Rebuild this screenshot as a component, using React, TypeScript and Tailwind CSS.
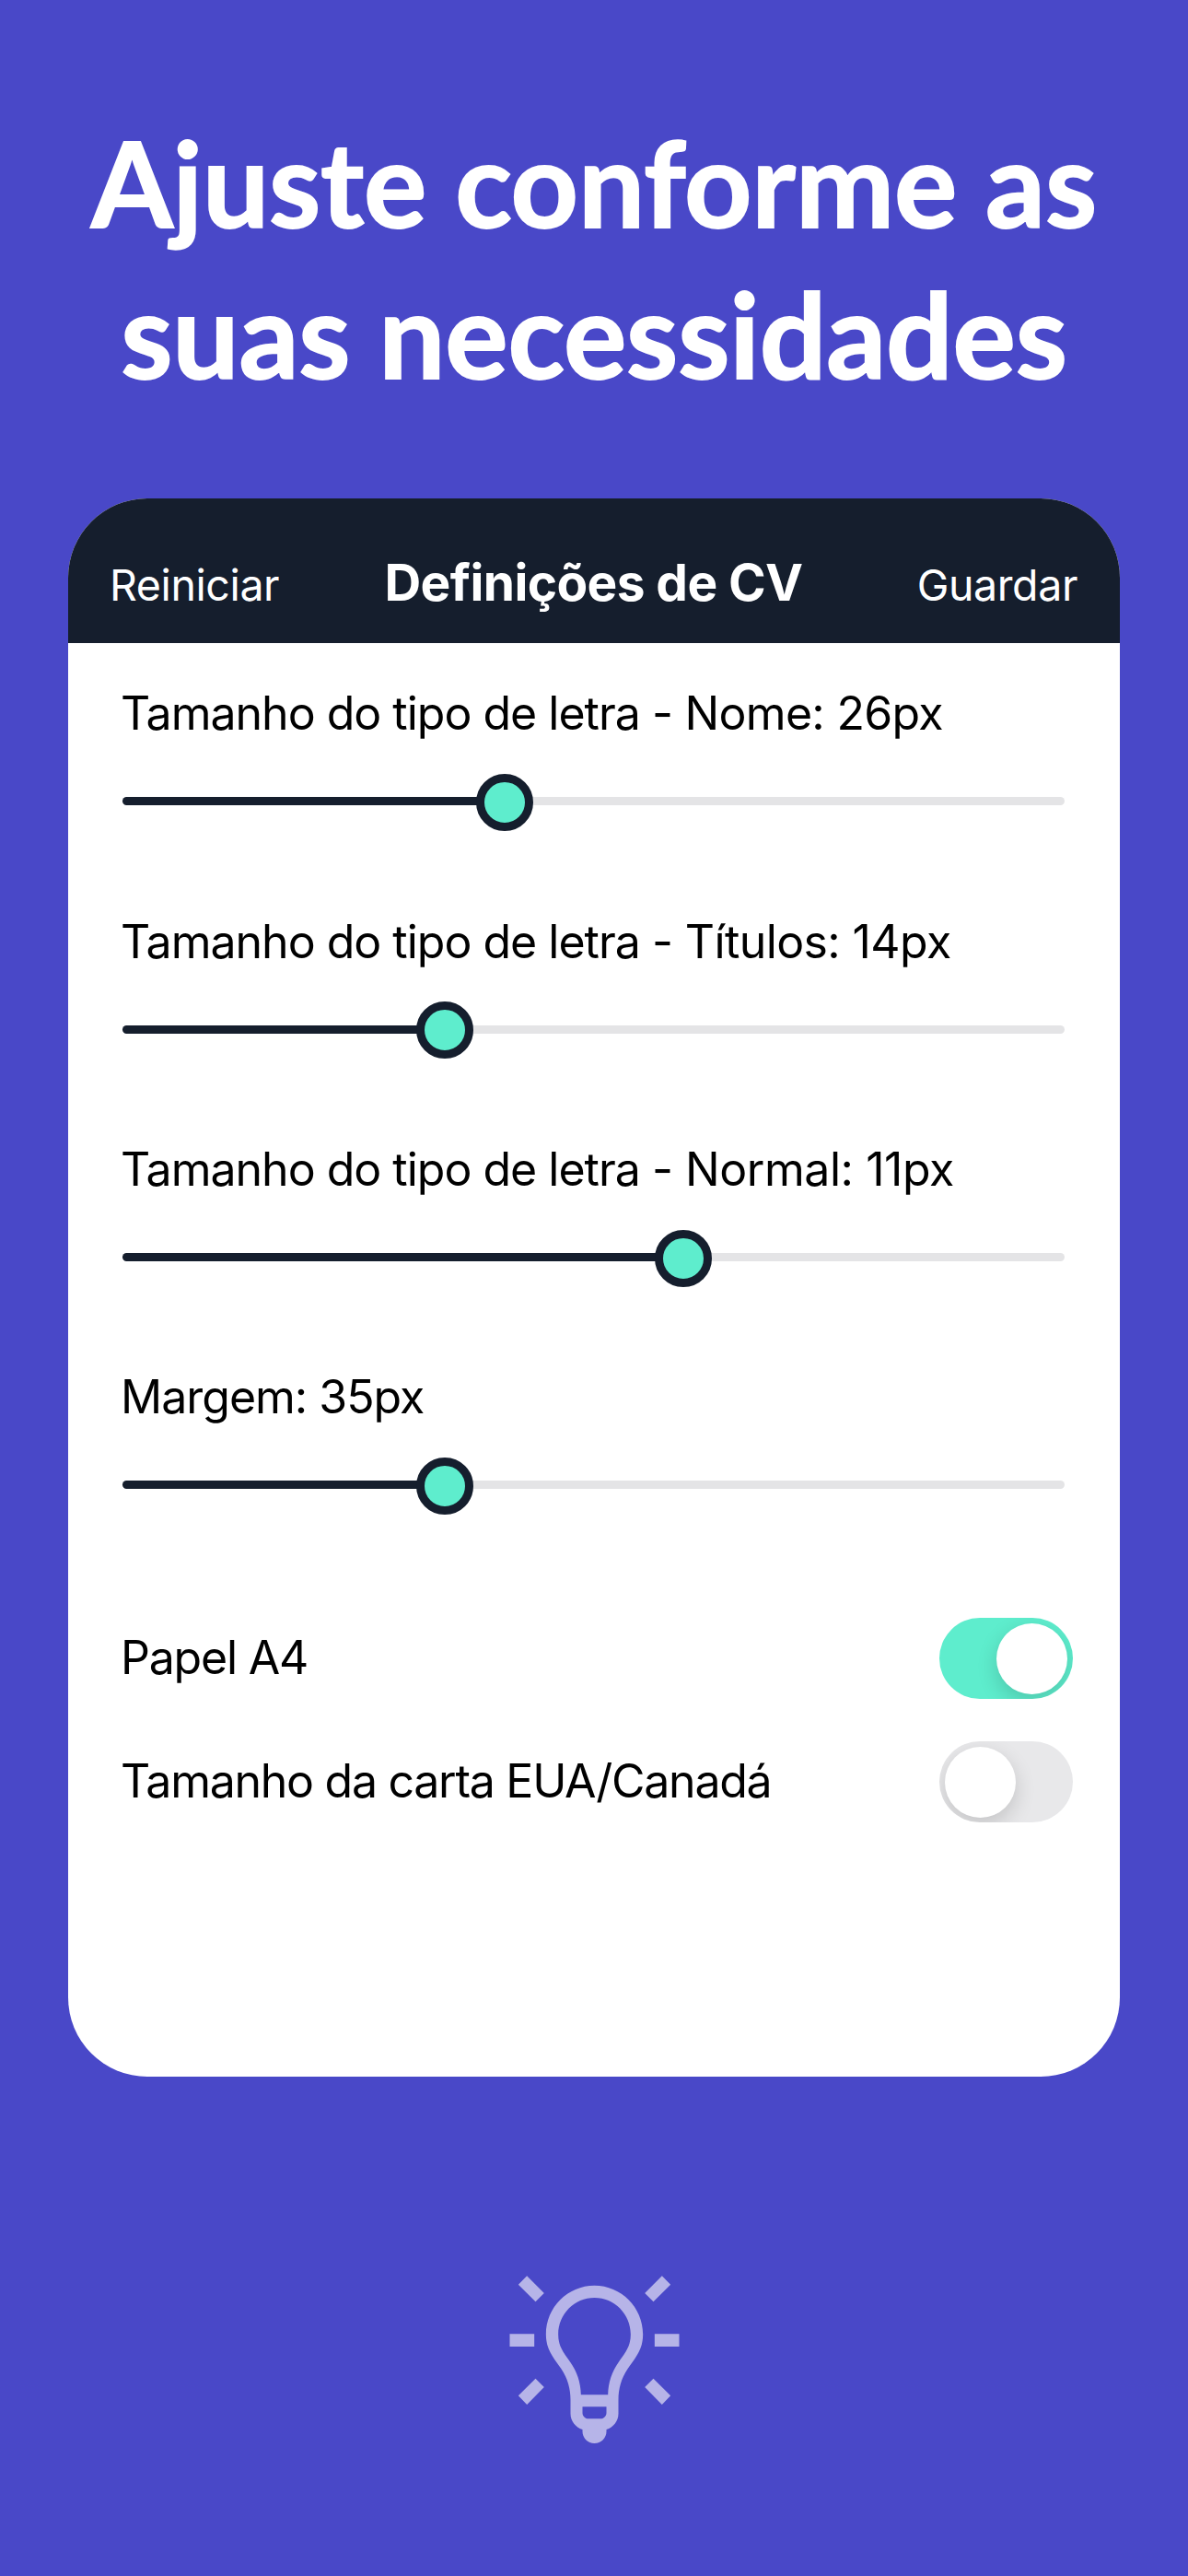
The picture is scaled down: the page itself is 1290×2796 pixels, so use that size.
import { useState } from "react";

type SliderProps = {
    label: string;
    detail: string;
    tracking: string;
    value: number;
}

type ToggleProps = {
    label: string;
    tracking: string;
    on: boolean;
    onToggle: () => void;
}

// value is the left edge of the knob, in px from the start of the track
const sliders: SliderProps[] = [
    { label: "Tamanho do tipo de letra ", detail: "- Nome: 26px", tracking: "tracking-[-0.7px]", value: 383.5 },
    { label: "Tamanho do tipo de letra ", detail: "- Títulos: 14px", tracking: "tracking-[-0.6px]", value: 318.5 },
    { label: "Tamanho do tipo de letra ", detail: "- Normal: 11px", tracking: "tracking-[-0.45px]", value: 577.5 },
    { label: "", detail: "Margem: 35px", tracking: "tracking-[-1px]", value: 318.5 },
];

const SliderRow = ({ label, detail, tracking, value }: SliderProps) => {
    return (
        <div className="h-[247.3px]">
            <div className="h-[60px] leading-[60px] text-[50px] text-black whitespace-pre">
                <span className="tracking-[-1px]">{label}</span>
                <span className={tracking}>{detail}</span>
            </div>
            <div className="relative mt-[61px] mr-[60.5px] ml-[2px] h-[9px] rounded-full bg-[#e4e4e6]">
                <div className="h-full rounded-full bg-[#151e2d]" style={{ width: value + 20 }} />
                <div className="absolute -top-[25.5px] w-[62px] h-[62px] rounded-full border-[9px] border-[#151e2d] bg-[#5eedcd]" style={{ left: value }} />
            </div>
        </div>
    )
}

const ToggleRow = ({ label, tracking, on, onToggle }: ToggleProps) => {
    return (
        <div className="flex items-center justify-between pr-[51px]">
            <span className={`pb-[2px] leading-[60px] text-[50px] text-black whitespace-nowrap ${tracking}`}>{label}</span>
            <button
                onClick={onToggle}
                className={`flex w-[145px] h-[88.5px] items-center overflow-hidden rounded-full px-[6px] ${on ? "justify-end bg-[#5eedcd]" : "justify-start bg-[#e8e8ea]"}`}
            >
                <span className="w-[77px] h-[77px] rounded-full bg-white shadow-[0_8px_22px_rgba(0,0,0,0.16)]" />
            </button>
        </div>
    )
}

const Bulb = () => {
    return (
        <svg viewBox="98 90 554 546" className="w-[185px] h-[182px]" fill="#b6b4e8">
            <path d="M99 280h80v41H99zM571 280h80v41h-80z" />
            <path d="M155 91l56 56-28 28-56-56zM595 91l28 28-56 56-28-28zM183 425l28 28-56 57-28-29zM567 425l56 56-28 29-56-57z" />
            <path
                fillRule="evenodd"
                d="M375 122C288 122 217 193 217 281C217 335 245 360 267 394C288 426 297 458 297 495V539C297 563 313 583 336 591V597C336 619 353 636 375 636S414 619 414 597V591C437 583 453 563 453 539V495C453 458 462 426 483 394C505 360 533 335 533 281C533 193 462 122 375 122ZM375 162C440 162 493 215 493 281C493 322 474 342 454 371C432 402 420 436 419 478H331C330 436 318 402 296 371C276 342 257 322 257 281C257 215 310 162 375 162ZM336 517H414V536C414 548 405 556 394 556H356C345 556 336 548 336 536Z"
            />
        </svg>
    )
}

const App = () => {
    const [a4, setA4] = useState<boolean>(true);

    return (
        <div className="flex h-[2796px] w-[1290px] flex-col items-center overflow-hidden bg-[#4948c8] font-['Inter',sans-serif]">
            <h1 className="mt-[116px] h-[328px] text-center font-['Lato',sans-serif] text-[128px] leading-[164px] font-bold tracking-[-0.15px] text-white whitespace-nowrap [-webkit-text-stroke:1.8px_white]">
                Ajuste conforme as<br />suas necessidades
            </h1>

            <div className="mt-[97.3px] h-[1713px] w-[1142px] overflow-hidden rounded-[86px] bg-white">
                <div className="grid h-[157px] grid-cols-[1fr_auto_1fr] items-baseline bg-[#151e2d] pt-[56px] pr-[46px] pl-[45px] text-white">
                    <button className="justify-self-start text-[46.5px] leading-[70px] tracking-[-0.4px]">Reiniciar</button>
                    <span className="text-[55px] leading-[70px] font-bold tracking-[-0.6px]">Definições de CV</span>
                    <button className="justify-self-end text-[46.5px] leading-[70px] tracking-[-0.4px]">Guardar</button>
                </div>

                <div className="pt-[46.2px] pl-[57px]">
                    {sliders.map((s) => (
                        <SliderRow key={s.detail} {...s} />
                    ))}
                    <div className="mt-[22.3px] flex flex-col gap-[45.5px]">
                        <ToggleRow label="Papel A4" tracking="tracking-[-1.2px]" on={a4} onToggle={() => setA4(!a4)} />
                        <ToggleRow label="Tamanho da carta EUA/Canadá" tracking="tracking-[-1.27px]" on={!a4} onToggle={() => setA4(!a4)} />
                    </div>
                </div>
            </div>

            <div className="mt-[215.7px]">
                <Bulb />
            </div>
        </div>
    )
}

export default App
